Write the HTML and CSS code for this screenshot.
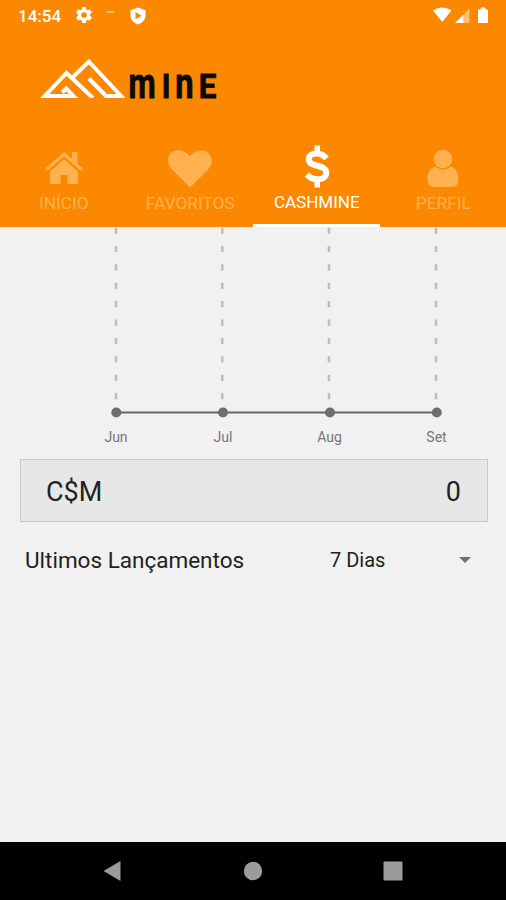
FILE: index.html
```html
<!DOCTYPE html>
<html lang="pt-BR">
<head>
    <meta charset="UTF-8">
    <meta name="viewport" content="width=device-width, initial-scale=1.0">
    <title>Cashmine</title>
    <link rel="stylesheet" href="styles.css">
</head>
<body>
    <header class="app-header">
        <div class="status-bar">
            <span class="clock">14:54</span>
            <svg class="status-gear" width="16" height="16" viewBox="2 2 20 20"><path fill="#fff" d="M19.4 13a7.500 7.500 0 0 0 0-2l2.100-1.650a.5.5 0 0 0 .12-.64l-2-3.460a.5.5 0 0 0-.61-.22l-2.490 1a7.300 7.300 0 0 0-1.690-.98l-.38-2.650A.5.5 0 0 0 14 2h-4a.5.5 0 0 0-.49.42l-.38 2.650c-.61.25-1.170.58-1.690.98l-2.490-1a.5.5 0 0 0-.61.22l-2 3.460a.5.5 0 0 0 .12.64L4.570 11a7.500 7.500 0 0 0 0 2l-2.110 1.650a.5.5 0 0 0-.12.64l2 3.460c.12.22.39.3.61.22l2.490-1c.52.4 1.080.73 1.690.98l.38 2.650c.03.24.24.42.49.42h4c.25 0 .46-.18.49-.42l.38-2.650c.61-.25 1.170-.59 1.690-.98l2.490 1c.23.09.49 0 .61-.22l2-3.460a.5.5 0 0 0-.12-.64zM12 15.500a3.500 3.500 0 1 1 0-7 3.500 3.500 0 0 1 0 7z"/></svg>
            <span class="status-dash"></span>
            <svg class="status-shield" width="16" height="18" viewBox="0 0 16 18"><path fill="#fff" d="M8 .5l7.500 2.800v5.200c0 4.200-3 7.500-7.500 9C3.500 16 .5 12.700.5 8.500V3.300z"/><path fill="#fb8800" d="M5.500 5l6 3.700-6 3.600z"/></svg>
            <svg class="status-right" width="60" height="18" viewBox="0 0 60 18">
                <path fill="#fff" d="M1 3.500Q10 -2.500 19.500 3.500L10.300 15z"/>
                <path fill="#fff" d="M23 16L31.500 7.500V16z"/>
                <path fill="#fff" opacity=".45" d="M31.500 7.500L37.500 1.500V16h-6z"/>
                <path fill="#fff" d="M46 3l3-1.500V.5h4v1L56 3v13H46z"/>
            </svg>
        </div>

        <div class="brand">
            <svg width="200" height="60" viewBox="0 0 200 60">
                <g fill="none" stroke="#fff" stroke-width="4">
                    <path d="M53 42L26.500 17 4.800 40H33.500L26.200 32.500 22.200 36.500"/>
                    <path d="M33 21L48.800 5.500 81 40H66L49 22.500"/>
                </g>
                <path fill="#fb8800" d="M36 42h32v4H36z"/>
                <g class="wordmark">
                    <text transform="translate(88.600 42) scale(.73 1)" font-size="43">m</text>
                    <text transform="translate(121.700 42) scale(.9 1)" font-size="33">I</text>
                    <text transform="translate(135.300 42) scale(.76 1)" font-size="43">n</text>
                    <text transform="translate(158.700 42) scale(.95 1)" font-size="33">E</text>
                </g>
            </svg>
        </div>

        <nav class="tabs">
            <a class="tab">
                <svg width="40" height="44" viewBox="0 0 40 44"><path fill="currentColor" d="M20 8L1 24.500l2.200 2.600L20 12.400l16.800 14.700L39 24.500l-5.500-4.800V8H28v6.700z"/><path fill="currentColor" d="M20 15.300L6 27.600V40h10.500v-9h7v9H34V27.600z"/></svg>
                <span>INÍCIO</span>
            </a>
            <a class="tab">
                <svg width="44" height="44" viewBox="0 0 44 44"><path fill="currentColor" d="M22 43.500L3.500 25C-1 20-1 13 3 9c4.500-4.300 13-4 19 3.200 6-7.200 14.500-7 19-2.700 4 4 4 11-.5 15.500z"/></svg>
                <span>FAVORITOS</span>
            </a>
            <a class="tab active">
                <svg width="30" height="44" viewBox="0 0 30 44"><path fill="none" stroke="currentColor" stroke-width="6" d="M24.500 14.500C19 7.500 6.800 8 6.800 15.500c0 8 17.500 4.500 17.500 13 0 8.500-13.500 9-19.300 2"/><path fill="currentColor" d="M12.500 1.500h5.500v9h-5.500zM12.500 34h5.500v9.500h-5.500z"/></svg>
                <span>CASHMINE</span>
            </a>
            <a class="tab">
                <svg width="32" height="44" viewBox="0 0 32 44"><circle cx="16" cy="15" r="9.300" fill="currentColor"/><path fill="currentColor" d="M8.500 22.500c4.500 4 10.500 4 15 0 5 1 8 6 8 13 0 4.500-2.500 7.500-6 7.500h-19c-3.500 0-6-3-6-7.500 0-7 3-12 8-13z"/></svg>
                <span>PERFIL</span>
            </a>
        </nav>
    </header>

    <main>
        <svg class="chart" width="506" height="226" viewBox="0 0 506 226">
            <g class="grid">
                <path d="M116 .5V180"/>
                <path d="M222.300 .5V180"/>
                <path d="M329 .5V180"/>
                <path d="M436 .5V180"/>
            </g>
            <path class="axis" d="M116 185.500H436.500"/>
            <g class="points">
                <circle cx="116.300" cy="185.500" r="5"/>
                <circle cx="223" cy="185.500" r="5"/>
                <circle cx="330" cy="185.500" r="5"/>
                <circle cx="436.800" cy="185.500" r="5"/>
            </g>
            <g class="labels">
                <text x="116" y="215">Jun</text>
                <text x="223" y="215">Jul</text>
                <text x="329.500" y="215">Aug</text>
                <text x="436.500" y="215">Set</text>
            </g>
        </svg>

        <div class="balance">
            <span>C$M</span>
            <span>0</span>
        </div>

        <div class="filter">
            <span class="filter-title">Ultimos Lançamentos</span>
            <div class="select">
                <span>7 Dias</span>
                <i class="caret"></i>
            </div>
        </div>
    </main>

    <footer class="nav-bar">
        <svg width="20" height="22" viewBox="0 0 20 22"><path d="M1.500 11L18.500 1v20z" stroke-linejoin="round"/></svg>
        <svg width="20" height="20" viewBox="0 0 20 20"><circle cx="10" cy="10" r="9.200"/></svg>
        <svg width="20" height="20" viewBox="0 0 20 20"><rect x=".5" y=".5" width="19" height="19" rx="1"/></svg>
    </footer>
</body>
</html>
```
FILE: styles.css
```css
* {
    box-sizing: border-box;
}
body {
    margin: 0;
    height: 900px;
    display: flex;
    flex-direction: column;
    font-family: Roboto, sans-serif;
    background-color: #f1f1f1;
    color: #222;
}
svg {
    display: block;
    flex-shrink: 0;
}

/* Header */
.app-header {
    height: 227px;
    background-color: #fb8800;
    color: #fff;
}
.status-bar {
    height: 56px;
    padding: 7px 14px 0 18px;
    display: flex;
    align-items: flex-start;
}
.clock {
    width: 58px;
    font-size: 17px;
    font-weight: 500;
    line-height: 18px;
}
.status-dash {
    width: 7px;
    height: 2px;
    margin: 4px 16px 0 15px;
    background-color: #fff;
    opacity: 0.5;
}
.status-right {
    margin-left: auto;
}
.brand {
    height: 88px;
    padding-left: 40px;
}
.wordmark {
    fill: #0a0a0a;
    stroke: #0a0a0a;
    stroke-width: 0.8;
    font-weight: 700;
}
.tabs {
    display: flex;
    height: 83px;
}
.tab {
    flex: 1;
    display: flex;
    flex-direction: column;
    align-items: center;
    color: #ffb04f;
    font-size: 17.3px;
    line-height: 20px;
    border-bottom: 3px solid transparent;
}
.tab svg,
.tab span {
    margin-left: 1px;
}
.tab span {
    margin-top: 5px;
}
.tab.active {
    color: #fff;
    border-bottom-color: #fff;
    font-size: 17px;
}
.tab.active span {
    margin-top: 4px;
}

/* Chart */
main {
    flex: 1;
}
.grid {
    stroke: #bdbdbd;
    stroke-width: 2.5;
    stroke-dasharray: 6.2 12.2;
}
.axis {
    stroke: #666;
    stroke-width: 2;
}
.points {
    fill: #6e6e6e;
}
.labels {
    fill: #777;
    font-size: 14px;
    text-anchor: middle;
}

.balance {
    margin: 6px 18px 0 20px;
    height: 63px;
    padding: 2px 26px 0 25px;
    display: flex;
    align-items: center;
    justify-content: space-between;
    background-color: #e7e7e7;
    border: 1.5px solid #c8c8c8;
    font-size: 27px;
}
.filter {
    display: flex;
    align-items: center;
    height: 40px;
    margin-top: 18px;
    padding: 0 35px 0 25px;
}
.filter-title {
    width: 305px;
    font-size: 22.5px;
}
.select {
    flex: 1;
    display: flex;
    align-items: center;
    justify-content: space-between;
    font-size: 20px;
}
.caret {
    border: 6px solid transparent;
    border-top-color: #707070;
    border-bottom: 0;
}

/* Android navigation bar */
.nav-bar {
    height: 58px;
    padding: 0 103px 0 102px;
    display: flex;
    align-items: center;
    justify-content: space-between;
    background-color: #000;
    fill: #9b9b9b;
}
```
